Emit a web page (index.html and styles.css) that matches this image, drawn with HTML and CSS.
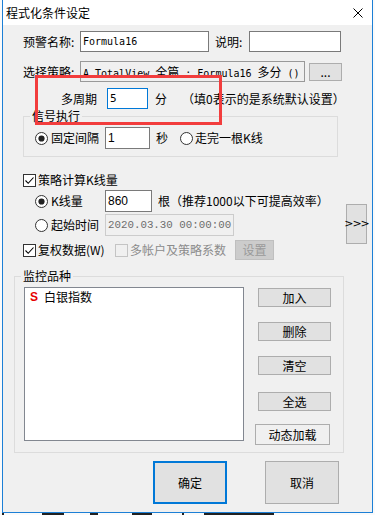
FILE: index.html
```html
<!DOCTYPE html>
<html lang="zh">
<head>
<meta charset="utf-8">
<title>程式化条件设定</title>
<link rel="stylesheet" href="styles.css">
</head>
<body>
<div class="window">
  <div class="titlebar">
    <span class="title">程式化条件设定</span>
    <svg class="close" viewBox="0 0 10 10" width="10" height="10"><path d="M0.5 0.5 L9.5 9.5 M9.5 0.5 L0.5 9.5" stroke="#000" stroke-width="1" fill="none"/></svg>
  </div>
  <div class="client">
    <div class="row r-name">
      <span class="lbl w-lbl">预警名称:</span>
      <div class="edit w-name mono"><span class="pre">Formula16</span></div>
      <span class="lbl w-desc">说明:</span>
      <div class="edit w-desc-in"></div>
    </div>
    <div class="row r-strat">
      <span class="lbl w-lbl">选择策略:</span>
      <div class="edit ro w-strat mono"><span class="pre">A.TotalView <span class="cjk">全篇</span> : Formula16 <span class="cjk">多分</span> ()</span></div>
      <div class="btn btn-dots">...</div>
    </div>
    <div class="row r-period">
      <span class="lbl w-period">多周期</span>
      <div class="edit focus w-period-in mono5">5</div>
      <span class="lbl unit">分</span>
      <span class="lbl hint">（填0表示的是系统默认设置）</span>
    </div>
    <fieldset class="grp grp-signal">
      <legend>信号执行</legend>
      <div class="row sig-row">
        <span class="rb on"></span>
        <span class="lbl rb-text w-opt">固定间隔</span>
        <div class="edit w-sec sans">1</div>
        <span class="lbl sec">秒</span>
        <span class="rb rb2"></span>
        <span class="lbl rb-text2">走完一根K线</span>
      </div>
    </fieldset>
    <div class="row chk-row">
      <span class="cb"><svg viewBox="0 0 11 11" width="11" height="11"><path d="M1.5 5.5 L4.2 8.3 L9.5 2.5" stroke="#000" stroke-width="1.1" fill="none"/></svg></span>
      <span class="lbl cb-text">策略计算K线量</span>
    </div>
    <div class="kl-block">
      <div class="kl-col">
        <div class="row kl-row">
          <span class="rb on"></span>
          <span class="lbl rb-text w-opt">K线量</span>
          <div class="edit w-bars sans">860</div>
          <span class="lbl bars-hint">根（推荐1000以下可提高效率）</span>
        </div>
        <div class="row kl-row kl-row2">
          <span class="rb"></span>
          <span class="lbl rb-text w-opt">起始时间</span>
          <div class="edit dis w-date datefont"><span class="pre">2020.03.30 00:00:00</span></div>
        </div>
      </div>
      <div class="btn btn-more">&gt;&gt;&gt;</div>
    </div>
    <div class="row fq-row">
      <span class="cb"><svg viewBox="0 0 11 11" width="11" height="11"><path d="M1.5 5.5 L4.2 8.3 L9.5 2.5" stroke="#000" stroke-width="1.1" fill="none"/></svg></span>
      <span class="lbl cb-text w-fq">复权数据(W)</span>
      <span class="cb dis"></span>
      <span class="lbl cb-text gray">多帐户及策略系数</span>
      <div class="btn btn-set">设置</div>
    </div>
    <fieldset class="grp grp-watch">
      <legend>监控品种</legend>
      <div class="watch">
        <div class="list">
          <div class="item"><span class="s">S</span><span class="iname">白银指数</span></div>
        </div>
        <div class="side">
          <div class="btn sbtn b-add">加入</div>
          <div class="btn sbtn b-del">删除</div>
          <div class="btn sbtn b-clr">清空</div>
          <div class="btn sbtn b-all">全选</div>
          <div class="btn sbtn b-dyn">动态加载</div>
        </div>
      </div>
    </fieldset>
    <div class="row r-foot">
      <div class="btn fbtn ok">确定</div>
      <div class="btn fbtn cancel">取消</div>
    </div>
  </div>
  <div class="annot"></div>
</div>
<div class="behind">
  <i class="mk m1"></i><i class="mk m2"></i><i class="mk m3"></i><i class="mk m4"></i><i class="mk m5"></i><i class="mk m6"></i>
</div>
</body>
</html>
```

FILE: styles.css
```css
* { box-sizing: border-box; }
html, body { margin: 0; padding: 0; }
body {
  width: 375px;
  height: 515px;
  overflow: hidden;
  background: #fafafa;
  font-family: "Noto Sans CJK SC", "Noto Sans", sans-serif;
  font-size: 12px;
  color: #000;
}
.window {
  position: relative;
  margin-left: 2px;
  width: 371px;
  height: 513px;
  border: 1px solid #1c7fd6;
  border-top: none;
  background: #f0f0f0;
  display: flex;
  flex-direction: column;
}
.titlebar {
  flex: none;
  height: 25px;
  background: #fff;
  display: flex;
  align-items: center;
  justify-content: space-between;
  padding-left: 3px;
  padding-right: 9px;
}
.title { font-size: 12px; line-height: 16px; }
.close { display: block; }
.client { flex: 1; }
.row { display: flex; align-items: center; }
.lbl { line-height: 16px; white-space: nowrap; flex: none; }
.pre { white-space: pre; }
.edit {
  flex: none;
  height: 21px;
  border: 1px solid #7a7a7a;
  background: #fff;
  padding-left: 2px;
  display: flex;
  align-items: center;
  white-space: nowrap;
  overflow: hidden;
}
.mono { font-family: "DejaVu Sans Mono", monospace; font-size: 10px; }
.mono5 { font-family: "DejaVu Sans Mono", monospace; font-size: 11px; }
.cjk { font-family: "Noto Sans CJK SC", sans-serif; font-size: 12px; }
.sans { font-family: "Liberation Sans", sans-serif; font-size: 12px; }
.datefont { font-family: "Liberation Mono", monospace; font-size: 10.8px; color: #6d6d6d; }
.btn {
  flex: none;
  border: 1px solid #adadad;
  background: #e1e1e1;
  display: flex;
  align-items: center;
  justify-content: center;
  line-height: 16px;
  white-space: nowrap;
}

/* row 1 */
.r-name { margin-top: 6px; padding-left: 20px; }
.w-lbl { width: 57px; }
.w-name { width: 129px; }
.w-desc { width: 34px; margin-left: 6px; }
.w-desc-in { width: 92px; }

/* row 2 */
.r-strat { margin-top: 9px; padding-left: 20px; }
.ro { background: #f0f0f0; border-color: #999; }
.w-strat { width: 225px; }
.btn-dots { width: 33px; height: 18px; margin-left: 4px; }

/* row 3 */
.r-period { margin-top: 6px; padding-left: 58px; }
.w-period { width: 46px; }
.focus { border-color: #0078d7; }
.w-period-in { width: 41px; }
.unit { margin-left: 7px; }
.hint { margin-left: 15px; }

/* group boxes */
.grp {
  margin: 0;
  min-width: 0;
  border: 1px solid #dcdcdc;
}
.grp legend {
  padding: 0 2px;
  font-size: 12px;
  line-height: 14px;
}
.grp-signal { margin-left: 20px; width: 315px; padding: 4px 0 7px 6px; }
.sig-row { margin-left: 5px; height: 22px; }
.w-sec { width: 45px; height: 22px; }
.sec { margin-left: 6px; }

/* radios and checks */
.rb {
  flex: none;
  width: 13px;
  height: 13px;
  border: 1px solid #333;
  border-radius: 50%;
  background: #fff;
  display: flex;
  align-items: center;
  justify-content: center;
}
.rb.on::after {
  content: "";
  width: 5px;
  height: 5px;
  border-radius: 50%;
  background: #222;
  box-shadow: 0 0 0 0.6px #222;
}
.rb-text { margin-left: 3px; }
.w-opt { width: 54px; }
.rb2 { margin-left: 12px; }
.rb-text2 { margin-left: 2px; }
.cb {
  flex: none;
  width: 13px;
  height: 13px;
  border: 1px solid #333;
  background: #fff;
  display: flex;
  align-items: center;
  justify-content: center;
}
.cb.dis { border-color: #c4c4c4; }
.cb-text { margin-left: 2px; }
.gray { color: #8c8c8c; }

.chk-row { margin-top: 15px; padding-left: 20px; height: 16px; }
.kl-block { display: flex; margin-top: 2px; }
.kl-col { display: flex; flex-direction: column; }
.kl-row { padding-left: 32px; height: 22px; }
.kl-row2 { margin-top: 2px; }
.w-bars { width: 47px; height: 22px; }
.bars-hint { margin-left: 6px; }
.dis { border-color: #cccccc; background: #f0f0f0; }
.w-date { width: 129px; height: 22px; }
.btn-more {
  width: 21px;
  height: 40px;
  margin: 14px 5px -8px auto;
  font-family: "DejaVu Sans", sans-serif;
  font-size: 11px;
  letter-spacing: -1px;
}

.fq-row { margin-top: 4px; padding-left: 20px; height: 20px; }
.w-fq { width: 77px; }
.btn-set {
  width: 39px;
  height: 20px;
  margin-left: 9px;
  background: #cccccc;
  border-color: #bfbfbf;
  color: #9a9a9a;
}

/* watch list */
.grp-watch { margin-top: 9px; margin-left: 11px; width: 330px; padding: 4px 0 7px 6px; }
.watch { display: flex; align-items: flex-start; }
.list {
  flex: none;
  width: 220px;
  height: 154px;
  margin-left: 3px;
  border: 1px solid #828790;
  background: #fff;
  padding: 1px 0 0 5px;
}
.item { display: flex; align-items: center; line-height: 16px; }
.s {
  color: #e60000;
  font-weight: bold;
  font-family: "Liberation Sans", sans-serif;
  font-size: 12px;
  width: 14px;
}
.side { display: flex; flex-direction: column; margin-left: 14px; }
.sbtn { width: 73px; height: 19px; }
.b-add { margin-top: 1px; }
.b-del { margin-top: 15px; }
.b-clr { margin-top: 15px; }
.b-all { margin-top: 17px; }
.b-dyn { margin-top: 13px; margin-left: -3px; width: 75px; height: 21px; background: #f0f0f0; }

/* footer */
.r-foot { margin-top: 8px; padding-left: 150px; }
.fbtn { width: 74px; height: 43px; }
.ok { border: 2px solid #0078d7; }
.cancel { margin-left: 38px; }

/* annotation */
.annot {
  position: absolute;
  left: 32px;
  top: 75px;
  width: 187px;
  height: 50px;
  border: 3px solid #f23d3d;
}

/* what lies behind the dialog */
.behind {
  height: 2px;
  display: flex;
  align-items: flex-start;
}
.mk { display: block; height: 2px; background: #222; }
.m1 { width: 2px; margin-left: 2px; }
.m2 { width: 22px; margin-left: 38px; }
.m3 { width: 8px; margin-left: 26px; }
.m4 { width: 20px; margin-left: 34px; }
.m5 { width: 2px; margin-left: 30px; }
.m6 { width: 70px; margin-left: 20px; }
```
